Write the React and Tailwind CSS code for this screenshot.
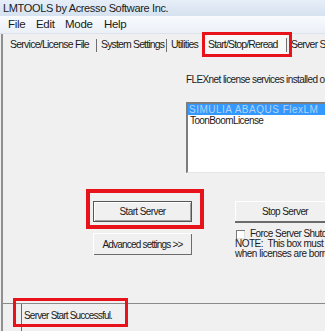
export default function App() {
  return (
    <div className="relative w-[325px] h-[331px] overflow-hidden bg-[#f0f0f0] font-['Liberation_Sans',Arial,sans-serif] text-[#1a1a1a] flex flex-col">
      <div className="h-[16px] shrink-0 bg-gradient-to-b from-[#e6eef8] to-[#d6e2f0] pl-[3px] text-[11px] leading-[16px] tracking-[-0.35px] text-[#1b1b1b] whitespace-nowrap">
        LMTOOLS by Acresso Software Inc.
      </div>
      <div className="h-[18px] shrink-0 flex items-center pl-[8px] text-[11.5px] tracking-[-0.3px] bg-gradient-to-b from-[#f8fafd] to-[#ebf0f7] border-b border-[#dde3ea] whitespace-nowrap">
        <span className="w-[28px]">File</span>
        <span className="w-[29px]">Edit</span>
        <span className="w-[39px]">Mode</span>
        <span>Help</span>
      </div>
      <div className="flex-1 flex flex-col ml-[1px] border-l-2 border-[#8f8f8f] min-h-0">
        <div className="h-[22px] shrink-0 flex items-center text-[10.5px] tracking-[-0.75px] whitespace-nowrap">
          <div className="w-[94px] shrink-0 h-full flex items-center pl-[7px]">
            <span>Service/License File</span>
            <span className="ml-auto w-[1px] h-[13px] bg-[#6e6e6e]" />
          </div>
          <div className="w-[70px] shrink-0 h-full flex items-center pl-[4px]">
            <span className="tracking-[-0.85px]">System Settings</span>
            <span className="ml-auto w-[1px] h-[13px] bg-[#6e6e6e]" />
          </div>
          <div className="w-[37px] shrink-0 h-full flex items-center pl-[4px]">
            <span>Utilities</span>
          </div>
          <div className="w-[83px] shrink-0 h-full flex items-center pl-[4px] bg-[#f7f7f7]">
            <span className="tracking-[-0.85px]">Start/Stop/Reread</span>
            <span className="ml-auto w-[1px] h-[14px] bg-[#6e6e6e]" />
          </div>
          <div className="h-full flex items-center pl-[4px]">
            <span>Server Status</span>
          </div>
        </div>

        <div className="flex-1 pt-[18px] min-h-0">
          <div className="pl-[183px] whitespace-nowrap">
            <div className="text-[10px] leading-[12px] tracking-[-0.6px]">
              FLEXnet license services installed on this computer
            </div>
            <div className="mt-[16px] h-[71px] w-[170px] bg-white border-l-2 border-t-2 border-[#7d7d7d] border-b border-b-[#e4e4e4] text-[10px] leading-[11px] tracking-[-0.6px]">
              <div className="h-[11px] bg-[#3399ff] text-[#b4d2f4] pl-[1px] tracking-[0.5px]">SIMULIA ABAQUS FlexLM</div>
              <div className="pl-[2px]">ToonBoomLicense</div>
            </div>
          </div>

          <div className="mt-[28px] flex whitespace-nowrap text-[10px] tracking-[-0.6px]">
            <div className="ml-[90px] w-[99px] shrink-0 flex flex-col">
              <div className="h-[21px] flex items-center justify-center border border-[#555555] bg-[#f0f0f0] shadow-[inset_1px_1px_0_#ffffff,inset_-1px_-1px_0_#a0a0a0]">
                Start Server
              </div>
              <div className="mt-[11px] h-[22px] flex items-center justify-center bg-[#f0f0f0] shadow-[inset_1px_1px_0_#ffffff,inset_-1px_-1px_0_#6b6b6b] tracking-[-0.8px]">
                Advanced settings &gt;&gt;
              </div>
            </div>
            <div className="ml-[43px] w-[110px] shrink-0 flex flex-col">
              <div className="h-[22px] w-[100px] flex items-center justify-center bg-[#f0f0f0] border-b-2 border-[#6b6b6b] shadow-[inset_1px_1px_0_#ffffff]">
                Stop Server
              </div>
              <div className="mt-[6px] h-[10px] flex items-center">
                <span className="ml-[1px] w-[9px] h-[9px] shrink-0 bg-white border-t border-l border-[#7a7a7a] shadow-[inset_-1px_-1px_0_#e0e0e0]" />
                <span className="ml-[5px] leading-[10px] tracking-[-0.55px]">Force Server Shutdown</span>
              </div>
              <div className="text-[10px] leading-[9.5px] tracking-[-0.5px]">
                <div>NOTE:&nbsp; This box must be checked</div>
                <div>when licenses are borrowed.</div>
              </div>
            </div>
          </div>
        </div>

        <div className="h-[28px] shrink-0 border-t border-[#8a8a8a] flex">
          <div className="ml-[18px] h-full border-l border-[#6a6a6a] pl-[2px] pt-[6px] text-[10px] leading-[12px] tracking-[-0.8px] whitespace-nowrap">
            Server Start Successful.
          </div>
        </div>
      </div>

      <div className="absolute left-[202px] top-[32px] w-[90px] h-[25px] border-[3px] border-[#e8121a]" />
      <div className="absolute left-[86px] top-[189px] w-[118px] h-[40px] border-4 border-[#e8121a]" />
      <div className="absolute left-[13px] top-[298px] w-[115px] h-[29px] border-[3px] border-[#e8121a]" />
    </div>
  );
}
